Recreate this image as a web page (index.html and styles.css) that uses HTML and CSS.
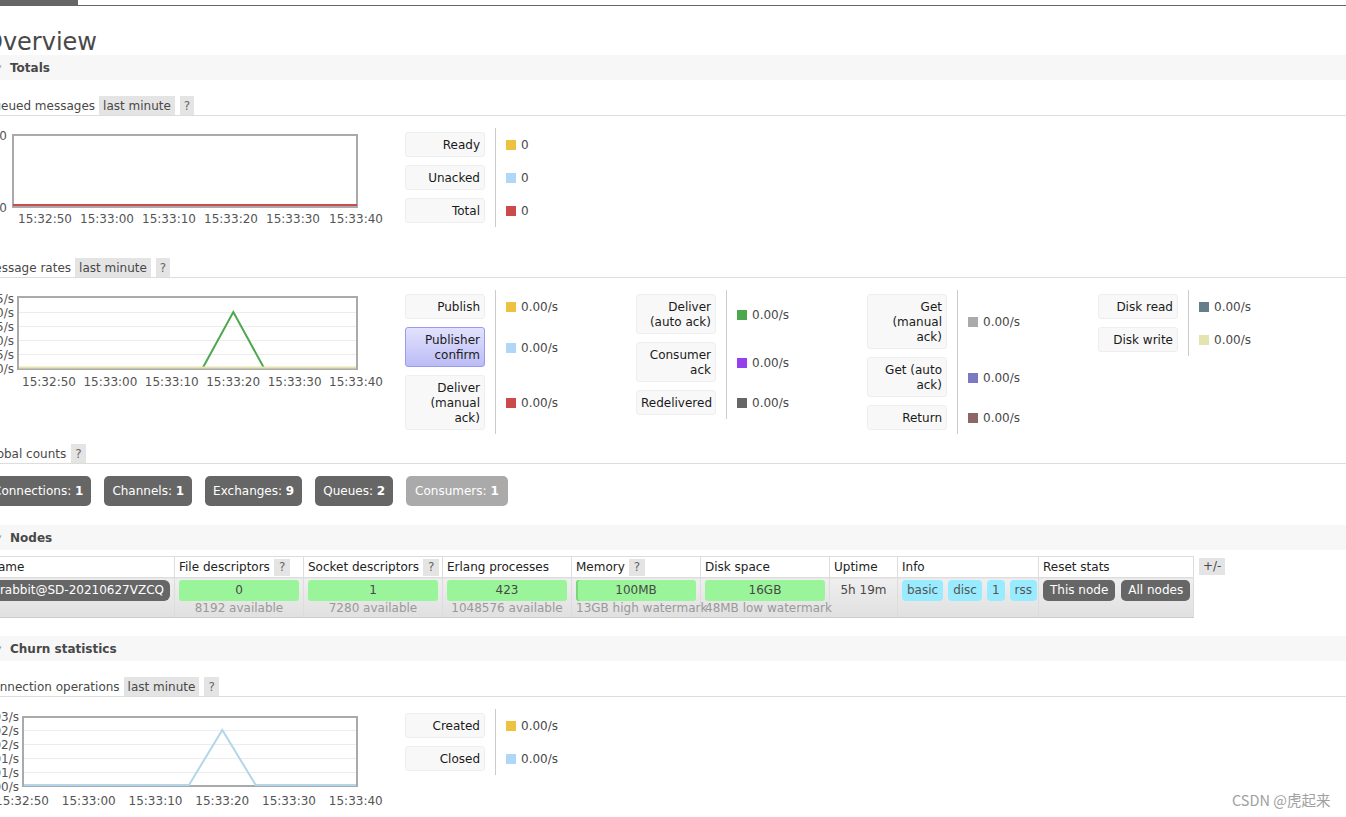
FILE: index.html
```html
<!DOCTYPE html>
<html>
<head>
<meta charset="utf-8">
<title>RabbitMQ Management</title>
<link rel="stylesheet" href="styles.css">
</head>
<body>
<div class="topbar"><div class="tab"></div></div>
<div class="main">
  <h1>Overview</h1>

  <h2 class="bar"><span class="tri">▼</span>Totals</h2>
  <h3>Queued messages<span class="opt">last minute</span><span class="help">?</span></h3>
  <div class="chart-row">
    <svg class="chart" width="421" height="100" viewBox="-16 128 421 100">
      <rect x="13" y="135" width="344" height="72" fill="#fff" stroke="#aaa" stroke-width="2"/>
      <line x1="13" y1="205" x2="357" y2="205" stroke="#cb4b4b" stroke-width="2"/>
      <text x="7" y="139.5" text-anchor="end">0</text>
      <text x="7" y="211.5" text-anchor="end">0</text>
      <text x="45" y="223" text-anchor="middle">15:32:50</text>
      <text x="107" y="223" text-anchor="middle">15:33:00</text>
      <text x="169" y="223" text-anchor="middle">15:33:10</text>
      <text x="231" y="223" text-anchor="middle">15:33:20</text>
      <text x="293" y="223" text-anchor="middle">15:33:30</text>
      <text x="356" y="223" text-anchor="middle">15:33:40</text>
    </svg>
    <div class="legend">
      <div class="lrow"><div class="lab">Ready</div><div class="val"><i class="sw c-yellow"></i>0</div></div>
      <div class="lrow"><div class="lab">Unacked</div><div class="val"><i class="sw c-blue"></i>0</div></div>
      <div class="lrow"><div class="lab">Total</div><div class="val"><i class="sw c-red"></i>0</div></div>
    </div>
  </div>

  <h3 class="h3-rates">Message rates<span class="opt">last minute</span><span class="help">?</span></h3>
  <div class="chart-row">
    <svg class="chart" width="421" height="100" viewBox="-16 290 421 100">
      <rect x="18" y="297" width="339" height="72" fill="#fff" stroke="#aaa" stroke-width="2"/>
      <line x1="19" y1="312.5" x2="356" y2="312.5" stroke="#ececec" stroke-width="1"/>
      <line x1="19" y1="326.5" x2="356" y2="326.5" stroke="#ececec" stroke-width="1"/>
      <line x1="19" y1="340.5" x2="356" y2="340.5" stroke="#ececec" stroke-width="1"/>
      <line x1="19" y1="354.5" x2="356" y2="354.5" stroke="#ececec" stroke-width="1"/>
      <polyline points="202.7,368 233.3,312 264,368" fill="none" stroke="#4da74d" stroke-width="2"/>
      <line x1="19" y1="367.5" x2="356" y2="367.5" stroke="#e6e3b2" stroke-width="2"/>
      <text x="14" y="302.5" text-anchor="end">1.25/s</text>
      <text x="14" y="316.5" text-anchor="end">1.00/s</text>
      <text x="14" y="330.5" text-anchor="end">0.75/s</text>
      <text x="14" y="344.5" text-anchor="end">0.50/s</text>
      <text x="14" y="358.5" text-anchor="end">0.25/s</text>
      <text x="14" y="372.5" text-anchor="end">0.00/s</text>
      <text x="49" y="385.5" text-anchor="middle">15:32:50</text>
      <text x="110.4" y="385.5" text-anchor="middle">15:33:00</text>
      <text x="171.8" y="385.5" text-anchor="middle">15:33:10</text>
      <text x="233.2" y="385.5" text-anchor="middle">15:33:20</text>
      <text x="294.6" y="385.5" text-anchor="middle">15:33:30</text>
      <text x="356" y="385.5" text-anchor="middle">15:33:40</text>
    </svg>
    <div class="legend">
      <div class="lrow"><div class="lab">Publish</div><div class="val"><i class="sw c-yellow"></i>0.00/s</div></div>
      <div class="lrow"><div class="lab lab-sel">Publisher confirm</div><div class="val"><i class="sw c-blue"></i>0.00/s</div></div>
      <div class="lrow"><div class="lab">Deliver (manual ack)</div><div class="val"><i class="sw c-red"></i>0.00/s</div></div>
    </div>
    <div class="legend">
      <div class="lrow"><div class="lab">Deliver (auto ack)</div><div class="val"><i class="sw c-green"></i>0.00/s</div></div>
      <div class="lrow"><div class="lab">Consumer ack</div><div class="val"><i class="sw c-purple"></i>0.00/s</div></div>
      <div class="lrow"><div class="lab">Redelivered</div><div class="val"><i class="sw c-dgray"></i>0.00/s</div></div>
    </div>
    <div class="legend">
      <div class="lrow"><div class="lab">Get (manual ack)</div><div class="val"><i class="sw c-lgray"></i>0.00/s</div></div>
      <div class="lrow"><div class="lab">Get (auto ack)</div><div class="val"><i class="sw c-violet"></i>0.00/s</div></div>
      <div class="lrow"><div class="lab">Return</div><div class="val"><i class="sw c-brown"></i>0.00/s</div></div>
    </div>
    <div class="legend">
      <div class="lrow"><div class="lab">Disk read</div><div class="val"><i class="sw c-slate"></i>0.00/s</div></div>
      <div class="lrow"><div class="lab">Disk write</div><div class="val"><i class="sw c-khaki"></i>0.00/s</div></div>
    </div>
  </div>

  <h3 class="h3-global">Global counts<span class="help">?</span></h3>
  <div class="counts">
    <a class="cbtn">Connections: <b>1</b></a>
    <a class="cbtn">Channels: <b>1</b></a>
    <a class="cbtn">Exchanges: <b>9</b></a>
    <a class="cbtn">Queues: <b>2</b></a>
    <a class="cbtn dim">Consumers: <b>1</b></a>
  </div>

  <h2 class="bar bar-nodes"><span class="tri">▼</span>Nodes</h2>
  <div class="nodes">
    <table class="ntable">
      <colgroup>
        <col class="w-name"><col class="w-129"><col class="w-139"><col class="w-129"><col class="w-129"><col class="w-129"><col class="w-68"><col class="w-141"><col class="w-155">
      </colgroup>
      <thead>
        <tr>
          <th>Name</th>
          <th>File descriptors<span class="help th-help">?</span></th>
          <th>Socket descriptors<span class="help th-help">?</span></th>
          <th>Erlang processes</th>
          <th>Memory<span class="help th-help">?</span></th>
          <th>Disk space</th>
          <th>Uptime</th>
          <th>Info</th>
          <th>Reset stats</th>
        </tr>
      </thead>
      <tbody>
        <tr>
          <td class="name"><span class="pill">rabbit@SD-20210627VZCQ</span></td>
          <td><div class="gbar">0</div><div class="sub">8192 available</div></td>
          <td><div class="gbar">1</div><div class="sub">7280 available</div></td>
          <td><div class="gbar">423</div><div class="sub">1048576 available</div></td>
          <td><div class="gbar gbar-mem">100MB</div><div class="sub">13GB high watermark</div></td>
          <td><div class="gbar">16GB</div><div class="sub">48MB low watermark</div></td>
          <td class="uptime">5h 19m</td>
          <td><div class="badges"><span class="badge">basic</span><span class="badge">disc</span><span class="badge">1</span><span class="badge">rss</span></div></td>
          <td><div class="resets"><span class="rbtn">This node</span><span class="rbtn">All nodes</span></div></td>
        </tr>
      </tbody>
    </table>
    <span class="plusminus">+/-</span>
  </div>

  <h2 class="bar bar-churn"><span class="tri">▼</span>Churn statistics</h2>
  <h3>Connection operations<span class="opt">last minute</span><span class="help">?</span></h3>
  <div class="chart-row">
    <svg class="chart" width="421" height="100" viewBox="-16 709 421 100">
      <rect x="23" y="717" width="334" height="69" fill="#fff" stroke="#aaa" stroke-width="2"/>
      <line x1="24" y1="730.5" x2="356" y2="730.5" stroke="#ececec" stroke-width="1"/>
      <line x1="24" y1="744.5" x2="356" y2="744.5" stroke="#ececec" stroke-width="1"/>
      <line x1="24" y1="758.5" x2="356" y2="758.5" stroke="#ececec" stroke-width="1"/>
      <line x1="24" y1="772.5" x2="356" y2="772.5" stroke="#ececec" stroke-width="1"/>
      <polyline points="24,785 189,785 222.3,730 255.7,785 356,785" fill="none" stroke="#b4d6ea" stroke-width="2"/>
      <text x="19" y="720.5" text-anchor="end">0.03/s</text>
      <text x="19" y="734.5" text-anchor="end">0.02/s</text>
      <text x="19" y="748.5" text-anchor="end">0.02/s</text>
      <text x="19" y="762.5" text-anchor="end">0.01/s</text>
      <text x="19" y="776.5" text-anchor="end">0.01/s</text>
      <text x="19" y="790.5" text-anchor="end">0.00/s</text>
      <text x="22" y="804.5" text-anchor="middle">15:32:50</text>
      <text x="88.8" y="804.5" text-anchor="middle">15:33:00</text>
      <text x="155.5" y="804.5" text-anchor="middle">15:33:10</text>
      <text x="222.3" y="804.5" text-anchor="middle">15:33:20</text>
      <text x="289" y="804.5" text-anchor="middle">15:33:30</text>
      <text x="355.8" y="804.5" text-anchor="middle">15:33:40</text>
    </svg>
    <div class="legend">
      <div class="lrow"><div class="lab">Created</div><div class="val"><i class="sw c-yellow"></i>0.00/s</div></div>
      <div class="lrow"><div class="lab">Closed</div><div class="val"><i class="sw c-blue"></i>0.00/s</div></div>
    </div>
  </div>
</div>
<div class="watermark">CSDN @虎起来</div>
</body>
</html>
```

FILE: styles.css
```css
html, body {
  margin: 0;
  padding: 0;
  background: #fff;
  overflow: hidden;
}
body {
  font-family: "DejaVu Sans", Verdana, sans-serif;
  font-size: 12px;
  color: #484848;
  width: 1346px;
  height: 817px;
  position: relative;
}
.topbar {
  height: 5px;
  border-bottom: 1px solid #666;
}
.tab {
  width: 78px;
  height: 5px;
  background: #666;
}
.main {
  margin-left: -16px;
}
h1 {
  font-size: 24px;
  font-weight: normal;
  line-height: 28px;
  height: 28px;
  margin: 21px 0 0;
  padding-top: 1px;
  box-sizing: border-box;
  color: #484848;
}
.bar {
  display: flex;
  align-items: center;
  height: 25px;
  margin: 0;
  padding-left: 12px;
  background: #f7f7f7;
  font-size: 12px;
  font-weight: bold;
  color: #484848;
}
.tri {
  font-size: 7px;
  width: 14px;
  color: #999;
  font-weight: normal;
}
.bar-nodes { margin-top: 19px; }
.bar-churn { margin-top: 18px; }

h3 {
  display: flex;
  align-items: flex-start;
  gap: 4px;
  height: 18px;
  line-height: 18px;
  padding-top: 1px;
  margin: 16px 0 0;
  font-size: 12px;
  font-weight: normal;
  border-bottom: 1px solid #ddd;
  color: #484848;
}
.h3-rates { margin-top: 30px; }
.h3-global { margin-top: 10px; }
.opt {
  background: #e4e4e4;
  padding: 1px 4px 0;
  margin-top: -1px;
}
.help {
  background: #e4e4e4;
  padding: 1px 4px 0;
  margin-top: -1px;
  color: #666;
  margin-left: 1px;
}

.chart-row {
  display: flex;
  align-items: flex-start;
  margin-top: 12px;
}
.chart {
  display: block;
  flex: none;
}
.chart text {
  font-family: "DejaVu Sans", Verdana, sans-serif;
  font-size: 12px;
  fill: #545454;
}
.legend {
  width: 231px;
  flex: none;
  display: flex;
  flex-direction: column;
}
.lrow {
  display: flex;
}
.lab {
  width: 80px;
  box-sizing: border-box;
  margin: 4px 0;
  padding: 5px 4px 3px;
  line-height: 15px;
  text-align: right;
  background: #f8f8f8;
  border: 1px solid #eee;
  border-radius: 3px;
  color: #1a1a1a;
}
.lab-sel {
  background: linear-gradient(#e2e2fd, #bcbcf6);
  border-color: #9a9aee;
}
.val {
  width: 130px;
  margin-left: 10px;
  padding-left: 10px;
  padding-top: 1px;
  border-left: 1px solid #ccc;
  display: flex;
  align-items: center;
  color: #484848;
}
.sw {
  display: inline-block;
  width: 10px;
  height: 10px;
  margin-right: 5px;
}
.c-yellow { background: #edc240; }
.c-blue { background: #afd8f8; }
.c-red { background: #cb4b4b; }
.c-green { background: #4da74d; }
.c-purple { background: #9440ed; }
.c-dgray { background: #666; }
.c-lgray { background: #aaa; }
.c-violet { background: #7c79c3; }
.c-brown { background: #8d6666; }
.c-slate { background: #657e8b; }
.c-khaki { background: #e4e4b0; }

.counts {
  display: flex;
  gap: 13px;
  margin: 12px 0 0 1px;
}
.cbtn {
  display: block;
  height: 30px;
  box-sizing: border-box;
  padding: 1px 8px 0;
  line-height: 29px;
  background: #666;
  color: #fff;
  border-radius: 5px;
  white-space: nowrap;
}
.cbtn.dim {
  background: #aaa;
  padding: 1px 9px 0;
}

.nodes {
  display: flex;
  align-items: flex-start;
  margin-top: 6px;
}
.ntable {
  border-collapse: collapse;
  table-layout: fixed;
  width: 1209px;
  flex: none;
}
.w-name { width: 190px; }
.w-129 { width: 129px; }
.w-139 { width: 139px; }
.w-68 { width: 68px; }
.w-141 { width: 141px; }
.w-155 { width: 155px; }
.ntable th {
  border: 1px solid #ddd;
  background: #fff;
  font-weight: normal;
  text-align: left;
  padding: 0 4px;
  height: 20px;
  line-height: 20px;
  color: #222;
  white-space: nowrap;
  overflow: visible;
}
.th-help {
  display: inline-block;
  line-height: 17px;
  margin-left: 4px;
  margin-top: 0;
  padding: 0 5px;
}
.ntable td {
  border: 1px solid #ddd;
  border-bottom-color: #ccc;
  background: linear-gradient(#efefef, #e0e0e0);
  vertical-align: top;
  padding: 2px 4px 0;
  height: 37px;
  white-space: nowrap;
}
.ntable td.name {
  text-align: right;
  overflow: visible;
}
.pill {
  display: inline-block;
  background: #666;
  color: #fff;
  border-radius: 6px;
  padding: 0 6px;
  line-height: 21px;
}
.gbar {
  height: 21px;
  line-height: 21px;
  text-align: center;
  background: #9af59a;
  border-radius: 3px;
  color: #484848;
}
.gbar-mem {
  box-shadow: inset 2px 0 0 #7bd67b;
}
.sub {
  text-align: center;
  line-height: 14px;
  color: #999;
  white-space: nowrap;
}
.uptime {
  text-align: center;
  line-height: 21px;
}
.badges {
  display: flex;
  gap: 5px;
}
.badge {
  background: #99ebff;
  color: #555;
  border-radius: 4px;
  padding: 0 5px;
  line-height: 21px;
}
.resets {
  display: flex;
  gap: 6px;
}
.rbtn {
  background: #666;
  color: #fff;
  border-radius: 5px;
  padding: 0 7px;
  line-height: 21px;
}
.plusminus {
  margin: 2px 0 0 5px;
  background: #e4e4e4;
  padding: 0 4px;
  line-height: 17px;
  color: #484848;
}

.watermark {
  position: absolute;
  left: 1232px;
  top: 790px;
  line-height: 20px;
  font-family: "Noto Sans CJK SC", "DejaVu Sans", sans-serif;
  font-size: 14.5px;
  color: #a0a0a0;
  white-space: nowrap;
}
```
